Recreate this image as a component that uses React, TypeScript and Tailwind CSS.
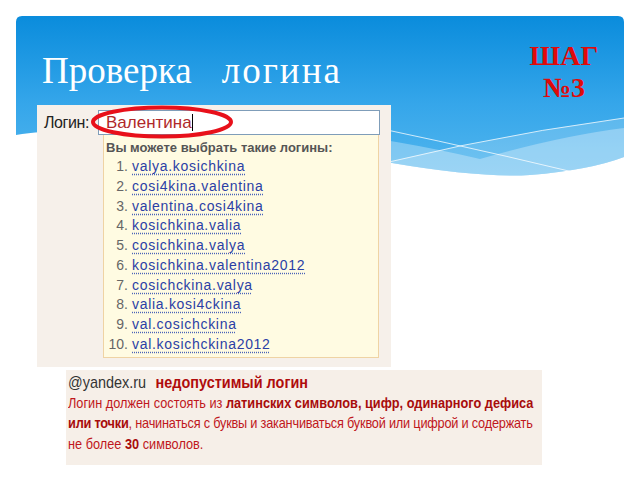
import React from "react";

const logins = [
  "valya.kosichkina",
  "cosi4kina.valentina",
  "valentina.cosi4kina",
  "kosichkina.valia",
  "cosichkina.valya",
  "kosichkina.valentina2012",
  "cosichckina.valya",
  "valia.kosi4ckina",
  "val.cosichckina",
  "val.kosichckina2012",
];

function Backdrop() {
  return (
    <svg className="absolute inset-0" width="640" height="480" viewBox="0 0 640 480">
      <defs>
        <linearGradient id="sky" x1="0" y1="0" x2="0" y2="1">
          <stop offset="0" stopColor="#0a8cdc" />
          <stop offset="0.55" stopColor="#35a6ea" />
          <stop offset="1" stopColor="#52b6ee" />
        </linearGradient>
      </defs>
      <path d="M22,16 H618 Q624,16 624,22 V157 Q590,170 530,175 Q480,178 392,163 C250,150 100,120 16,135 V22 Q16,16 22,16 Z" fill="url(#sky)" />
      {/* left and right light ribbons meeting in a V */}
      <path d="M300,128 Q400,140 480,159 Q560,136 624,128 V157 Q590,170 530,175 Q480,178 392,163 C350,158 320,152 300,150 Z" fill="#ffffff" opacity="0.3" />
      {/* lightest strip under the rising line */}
      <path d="M300,185 Q460,140 624,118 V157 Q590,170 530,175 Q480,178 392,163 C350,158 320,152 300,150 Z" fill="#ffffff" opacity="0.18" />
      <path d="M300,112 Q440,140 573,172" stroke="#ffffff" strokeOpacity="0.75" strokeWidth="1" fill="none" />
      <path d="M300,185 Q460,140 624,118" stroke="#ffffff" strokeOpacity="0.75" strokeWidth="1" fill="none" />
    </svg>
  );
}

export default function App() {
  return (
    <div className="relative w-[640px] h-[480px] bg-white overflow-hidden">
      <Backdrop />

      <div className="relative flex flex-col">
        {/* title row */}
        <div className="flex items-start h-[105px]">
          <div className="pl-[42px] pt-[52px] text-[37px] leading-[38px] text-white whitespace-nowrap font-['Liberation_Serif',serif]">
            <span>Проверка</span>
            <span className="ml-[30px] tracking-[2px]">логина</span>
          </div>
          <div className="ml-auto mr-[26px] w-[100px] pt-[40px] text-center text-[28px] leading-[32px] font-bold text-[#e00a0a] font-['Liberation_Serif',serif]">
            ШАГ
            <br />
            №3
          </div>
        </div>

        {/* screenshot of the form */}
        <div className="ml-[37px] w-[354px] h-[262px] bg-[#f6f0ea] flex flex-col pt-[5px] font-['Liberation_Sans',Arial,sans-serif]">
          <div className="flex items-center h-[25px]">
            <div className="w-[61px] pl-[7px] text-[16px] text-[#222] tracking-tight">Логин:</div>
            <div className="w-[282px] h-[25px] border border-[#7f9db9] bg-white flex items-center pl-[7px]">
              <span className="text-[17px] text-[#b0282a]">Валентина</span>
              <span className="w-px h-[17px] bg-black" />
            </div>
          </div>
          <div className="ml-[66px] w-[276px] h-[223px] border border-t-0 border-[#efd3a4] bg-[#fffbe2] pt-[3px]">
            <div className="pl-[2px] h-[19px] leading-[19px] text-[13px] font-bold text-[#555]">
              Вы можете выбрать такие логины:
            </div>
            {logins.map((l, i) => (
              <div key={l} className="flex h-[19.75px] leading-[19.75px] text-[14px]">
                <span className="w-[24px] text-right text-[#666]">{i + 1}.</span>
                <span className="ml-[4px] text-[#2b3fa6] tracking-[0.7px] underline decoration-dotted decoration-[#4a63b8] underline-offset-[3px]">
                  {l}
                </span>
              </div>
            ))}
          </div>
        </div>

        {/* error message */}
        <div className="mt-[3px] ml-[66px] w-[476px] h-[95px] bg-[#f6efe8] pl-[2px] pt-[3px] overflow-hidden font-['Liberation_Sans',Arial,sans-serif]">
          <div className="w-[555px] origin-left scale-x-[0.85] whitespace-nowrap">
            <div className="text-[17px] leading-[19.5px]">
              <span className="text-[#333]">@yandex.ru</span>
              <span className="ml-[11px] font-bold text-[#b00c0c]">недопустимый логин</span>
            </div>
            <div className="text-[15px] leading-[20.5px] text-[#c0171c]">
              Логин должен состоять из <b className="text-[#a80c0c]">латинских символов, цифр, одинарного дефиса</b>
              <br />
              <span className="tracking-[-0.25px]">
                <b className="text-[#a80c0c]">или точки</b>, начинаться с буквы и заканчиваться буквой или цифрой и содержать
              </span>
              <br />
              не более <b className="text-[#a80c0c]">30</b> символов.
            </div>
          </div>
        </div>
      </div>

      {/* red ellipse marking the field */}
      <svg className="absolute left-[90px] top-[105px]" width="146" height="34" viewBox="0 0 146 34">
        <ellipse cx="72" cy="17" rx="69" ry="14.5" fill="none" stroke="#e8101a" strokeWidth="4" />
      </svg>
    </div>
  );
}
